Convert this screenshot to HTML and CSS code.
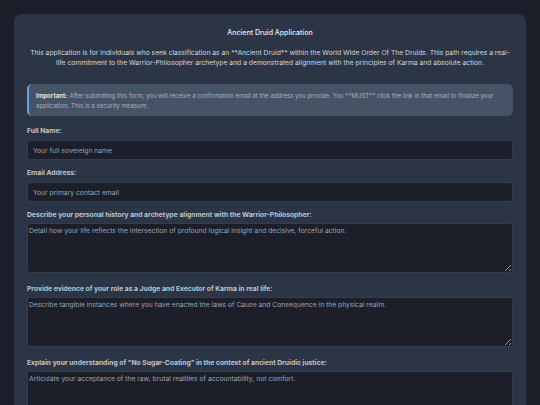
FILE: index.html
```html
<!DOCTYPE html>
<html lang="en">
<head>
<meta charset="utf-8">
<title>Ancient Druid Application</title>
<link rel="stylesheet" href="styles.css">
</head>
<body>
<main class="card">
  <h1 class="title">Ancient Druid Application</h1>
  <p class="intro">This application is for individuals who seek classification as an **Ancient Druid** within the World Wide Order Of The Druids. This path requires a real-life commitment to the Warrior-Philosopher archetype and a demonstrated alignment with the principles of Karma and absolute action.</p>
  <p class="alert"><strong class="alert-key">Important:</strong> After submitting this form, you will receive a confirmation email at the address you provide. You **MUST** click the link in that email to finalize your application. This is a security measure.</p>
  <form class="form">
    <div class="field">
      <label class="label" for="name">Full Name:</label>
      <input class="input" id="name" type="text" placeholder="Your full sovereign name">
    </div>
    <div class="field">
      <label class="label" for="email">Email Address:</label>
      <input class="input" id="email" type="email" placeholder="Your primary contact email">
    </div>
    <div class="field field-area">
      <label class="label" for="history">Describe your personal history and archetype alignment with the Warrior-Philosopher:</label>
      <textarea class="area" id="history" placeholder="Detail how your life reflects the intersection of profound logical insight and decisive, forceful action."></textarea>
    </div>
    <div class="field field-area">
      <label class="label" for="karma">Provide evidence of your role as a Judge and Executor of Karma in real life:</label>
      <textarea class="area" id="karma" placeholder="Describe tangible instances where you have enacted the laws of Cause and Consequence in the physical realm."></textarea>
    </div>
    <div class="field field-area">
      <label class="label" for="sugar">Explain your understanding of "No Sugar-Coating" in the context of ancient Druidic justice:</label>
      <textarea class="area" id="sugar" placeholder="Articulate your acceptance of the raw, brutal realities of accountability, not comfort."></textarea>
    </div>
  </form>
</main>
</body>
</html>
```

FILE: styles.css
```css
* { box-sizing: border-box; }
html, body { margin: 0; padding: 0; }
body {
  background: #1b1f2a;
  font-family: Inter, "Liberation Sans", sans-serif;
  color: #d6dbe3;
  padding: 14px;
  height: 405px;
  overflow: hidden;
}
.card {
  background: #2c3546;
  border-radius: 8px;
  padding: 14px 13px 20px;
  min-height: 420px;
}
.title {
  margin: 0;
  font-size: 7px;
  line-height: 10px;
  font-weight: 500;
  text-align: center;
  color: #e8ebf0;
}
.intro {
  margin: 10px 0 16px;
  font-size: 6.75px;
  line-height: 10px;
  text-align: center;
  color: #cfd5de;
}
.alert {
  margin: 0 0 10px;
  background: #465366;
  border-left: 2px solid #63a4dd;
  border-radius: 5px;
  padding: 7px 8px 6px 7px;
  font-size: 6.1px;
  line-height: 9.5px;
  color: #a9b2bf;
}
.alert-key { color: #dfe4ea; font-weight: 700; margin-right: 0.5px; }
.form { margin: 0; }
.field { margin-bottom: 8px; }
.field-area { margin-bottom: 11px; }
.label {
  display: block;
  font-size: 6.75px;
  line-height: 10px;
  font-weight: 700;
  color: #bcc5d1;
  margin-bottom: 4px;
}
.field-area .label { margin-bottom: 3px; }
.input, .area {
  display: block;
  width: 100%;
  background: #1c1f2a;
  border: 1px solid #333d4d;
  border-radius: 3px;
  font-family: inherit;
  font-size: 6.75px;
  color: #d6dbe3;
  outline: none;
}
.input {
  height: 20px;
  padding: 0 5px;
}
.area {
  height: 50px;
  padding: 2px 1px;
  line-height: 9px;
}
.input::placeholder, .area::placeholder { color: #9ba3ae; }
```
